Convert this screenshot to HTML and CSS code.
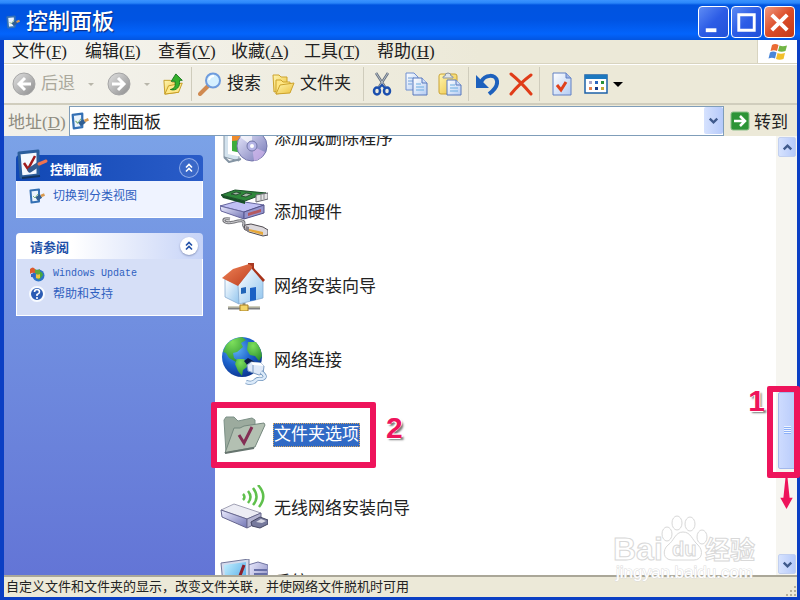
FILE: index.html
```html
<!DOCTYPE html>
<html lang="zh-CN">
<head>
  <meta charset="UTF-8">
  <meta name="viewport" content="width=device-width, initial-scale=1.0">
  <title>控制面板</title>
  <link rel="stylesheet" href="styles.css">
</head>
<body>
  <svg class="defs" width="0" height="0">
    <defs>
      <linearGradient id="gray" x1="0" y1="0" x2="1" y2="1"><stop offset="0" stop-color="#e2e2e2"/><stop offset="1" stop-color="#8c8c8c"/></linearGradient>
      <linearGradient id="lilac" x1="0" y1="0" x2="1" y2="1"><stop offset="0" stop-color="#ececff"/><stop offset="1" stop-color="#7275b4"/></linearGradient>
      <linearGradient id="yellow" x1="0" y1="0" x2="1" y2="1"><stop offset="0" stop-color="#fff6b0"/><stop offset="1" stop-color="#ecc03c"/></linearGradient>
      <linearGradient id="sheet" x1="0" y1="0" x2="1" y2="1"><stop offset="0" stop-color="#ffffff"/><stop offset="1" stop-color="#b4ccf2"/></linearGradient>
      <linearGradient id="wall" x1="0" y1="0" x2="1" y2="1"><stop offset="0" stop-color="#ffffff"/><stop offset="1" stop-color="#8fc4ee"/></linearGradient>
      <radialGradient id="sea" cx=".35" cy=".3" r=".8"><stop offset="0" stop-color="#62b4f4"/><stop offset=".5" stop-color="#1c62cc"/><stop offset="1" stop-color="#0a2c84"/></radialGradient>
      <radialGradient id="land" cx=".4" cy=".2" r=".9"><stop offset="0" stop-color="#7ee05c"/><stop offset="1" stop-color="#238a2c"/></radialGradient>
      <linearGradient id="roof" x1="0" y1="0" x2="1" y2="1"><stop offset="0" stop-color="#f08458"/><stop offset="1" stop-color="#bc3c1c"/></linearGradient>
      <linearGradient id="screen" x1="0" y1="0" x2="1" y2="1"><stop offset="0" stop-color="#c4f0ff"/><stop offset="1" stop-color="#3c9ce0"/></linearGradient>
      <symbol id="panel" viewBox="0 0 32 32">
        <path d="M3 5 22 3v24L5 29z" fill="#f4f9ff" stroke="#2b5e9c" stroke-width="3" stroke-linejoin="round"/>
        <path d="m6 30 18-2" stroke="#12345f" stroke-width="2"/>
        <path d="m8 15 4 6 7-13" fill="none" stroke="#a01c1c" stroke-width="2.500"/>
        <path d="m14 22 9-6" stroke="#345d91" stroke-width="5" stroke-linecap="round"/>
        <path d="m23 16 7-3" stroke="#ef7350" stroke-width="3" stroke-linecap="round"/>
      </symbol>
      <symbol id="panel-small" viewBox="0 0 16 16">
        <path d="M1.500 2.500 10 1.500v12L2.500 14.500z" fill="#eaf3fd" stroke="#3470b4" stroke-width="2" stroke-linejoin="round"/>
        <path d="m4 8 2 2 3-4" fill="none" stroke="#84b67c"/>
        <path d="m7.500 11 4.500-3" stroke="#305e92" stroke-width="4"/>
        <path d="m12 8 3.500-1.500" stroke="#d99a50" stroke-width="2.500"/>
      </symbol>
      <symbol id="chevrons" viewBox="0 0 18 18">
        <path d="m6 8.500 3-3 3 3m-6 4 3-3 3 3" fill="none" stroke="currentColor" stroke-width="1.600"/>
      </symbol>
    </defs>
  </svg>

  <div class="window">
    <header class="titlebar">
      <svg class="title-icon" viewBox="0 0 16 16"><use href="#panel-small"/></svg>
      <h1 class="title">控制面板</h1>
      <button class="caption" aria-label="最小化"><svg viewBox="0 0 30 30"><path d="M7 21h11v4H7z" fill="#fff"/></svg></button>
      <button class="caption" aria-label="最大化"><svg viewBox="0 0 30 30"><path d="M7 7h16v16H7zM6 7h18" fill="none" stroke="#fff" stroke-width="3"/></svg></button>
      <button class="caption caption-close" aria-label="关闭"><svg viewBox="0 0 30 30"><path d="m7 7 16 16M23 7 7 23" stroke="#fff" stroke-width="4"/></svg></button>
    </header>

    <nav class="menubar">
      <button class="menu">文件(<u>F</u>)</button>
      <button class="menu">编辑(<u>E</u>)</button>
      <button class="menu">查看(<u>V</u>)</button>
      <button class="menu">收藏(<u>A</u>)</button>
      <button class="menu">工具(<u>T</u>)</button>
      <button class="menu">帮助(<u>H</u>)</button>
      <div class="flag">
        <svg width="20" height="20" viewBox="0 0 20 20">
          <path d="M4 3q3-2 6.500 0L9 9Q6 7.500 2.500 9z" fill="#ea6b34"/>
          <path d="M11.500 3.500q3 1.500 7.500 0L17.500 9q-4 1.500-7.500 0z" fill="#72b545"/>
          <path d="M2 10.500q3-2 6.500 0L7 16.500Q4 15 .5 16.500z" fill="#4a86d8"/>
          <path d="M9.500 11q3 1.500 7.500 0l-1.500 6q-4 1.500-7.500 0z" fill="#f2bf2c"/>
        </svg>
      </div>
    </nav>

    <div class="toolbar">
      <button class="tool" disabled>
        <svg viewBox="0 0 24 24"><circle cx="12" cy="12" r="11" fill="url(#gray)" stroke="#a5a5a5"/><path d="M19 12H7m6-6-6 6 6 6" fill="none" stroke="#fff" stroke-width="3"/></svg>
        后退
      </button>
      <button class="drop" disabled aria-label="后退列表"></button>
      <button class="tool" disabled aria-label="前进">
        <svg viewBox="0 0 24 24"><circle cx="12" cy="12" r="11" fill="url(#gray)" stroke="#a5a5a5"/><path d="M5 12h12m-6-6 6 6-6 6" fill="none" stroke="#fff" stroke-width="3"/></svg>
      </button>
      <button class="drop" disabled aria-label="前进列表"></button>
      <button class="tool tool-up" aria-label="向上">
        <svg viewBox="0 0 24 24"><path d="M1 8h7l2 2h7v11L2 23z" fill="url(#yellow)" stroke="#c49a20"/><path d="m2 23 4-9 15-3-4 10z" fill="#ffe98a" stroke="#c49a20"/><path d="M8 18c5-1 6-4 5-9H9l5-8 7 7h-3c1 7-3 12-10 10z" fill="#35b02c" stroke="#16751a"/></svg>
      </button>
      <span class="sep"></span>
      <button class="tool">
        <svg viewBox="0 0 24 24"><path d="m2 22 8-8" stroke="#d08a50" stroke-width="4" stroke-linecap="round"/><circle cx="15" cy="8.500" r="7" fill="#d5f0ff" stroke="#6f9cdd" stroke-width="2"/><path d="M11 8q1-4 5-4" fill="none" stroke="#fff" stroke-width="2"/></svg>
        搜索
      </button>
      <button class="tool tool-folders">
        <svg viewBox="0 0 24 24"><path d="M2 3h6l2 2h6v12L3 20z" fill="url(#yellow)" stroke="#cda32c"/><path d="M5 8h5l2 2h7v10L5 22z" fill="#ffe683" stroke="#cda32c"/><path d="m5 22 4-9 14-2-4 10z" fill="url(#yellow)" stroke="#cda32c"/></svg>
        文件夹
      </button>
      <span class="sep"></span>
      <button class="tool tool-icon" aria-label="剪切">
        <svg viewBox="0 0 24 24"><path d="m6 1 9 14M18 1 9 15" stroke="#65707e" stroke-width="2.500"/><path d="m6 1 9 14M18 1 9 15" stroke="#c8d0da" stroke-width=".8"/><ellipse cx="7" cy="19" rx="3" ry="3.500" fill="none" stroke="#1b4fae" stroke-width="2.500"/><ellipse cx="17" cy="19" rx="3" ry="3.500" fill="none" stroke="#1b4fae" stroke-width="2.500"/><path d="m9 16 3-3 3 3" fill="none" stroke="#1b4fae" stroke-width="2"/></svg>
      </button>
      <button class="tool tool-icon" aria-label="复制">
        <svg viewBox="0 0 24 24"><path d="M2 1h8l4 4v13H2z" fill="url(#sheet)" stroke="#6f8fd0"/><path d="M4 6h6m-6 3h7m-7 3h4" stroke="#74a2d8"/><path d="M9 6h9l5 5v12H9z" fill="url(#sheet)" stroke="#5878bc"/><path d="M18 6v5h5" fill="#cfdef8" stroke="#5878bc"/><path d="M12 12h5m-5 3h8m-8 3h8" stroke="#6bade0"/></svg>
      </button>
      <button class="tool tool-icon" aria-label="粘贴">
        <svg viewBox="0 0 24 24"><rect x="1" y="2" width="18" height="20" rx="2" fill="url(#yellow)" stroke="#c9a234"/><path d="M5 5q0-1 2-1 0-3 3-3t3 3q2 0 2 1v1H5z" fill="#dfe5e8" stroke="#8a94a0"/><path d="M9 8h9l5 5v10H9z" fill="url(#sheet)" stroke="#5878bc"/><path d="M18 8v5h5" fill="#cfdef8" stroke="#5878bc"/><path d="M12 13h5m-5 3h8m-8 3h8" stroke="#6bade0"/></svg>
      </button>
      <span class="sep"></span>
      <button class="tool tool-icon" aria-label="撤消">
        <svg viewBox="0 0 24 24"><path d="M6 10c4-8 15-8 16-1 1 6-4 10-8 13" fill="none" stroke="#1d61bd" stroke-width="4"/><path d="M1 3v13h13z" fill="#1d61bd"/></svg>
      </button>
      <button class="tool tool-icon" aria-label="删除">
        <svg viewBox="0 0 24 24"><path d="M2 2q10 8 20 20M22 3Q10 12 2 22" fill="none" stroke="#e03c18" stroke-width="3" stroke-linecap="round"/></svg>
      </button>
      <span class="sep"></span>
      <button class="tool tool-icon tool-props" aria-label="属性">
        <svg viewBox="0 0 24 24"><path d="M3 1h13l5 5v17H3z" fill="url(#sheet)" stroke="#6080c4"/><path d="M16 1v5h5" fill="#9fb5e4" stroke="#6080c4"/><path d="m7 13 4 5 5-8" fill="none" stroke="#e0411c" stroke-width="3"/></svg>
      </button>
      <button class="tool tool-views" aria-label="查看方式">
        <svg viewBox="0 0 24 24"><path d="M1 3h22v18H1z" fill="#fff" stroke="#1d61a8" stroke-width="1.500"/><path d="M1 3h22v4H1z" fill="#1c78bf"/><path d="M5 9h3v3H5z" fill="#aaa6cc"/><path d="M11 9h3v3h-3z" fill="#2b66c0"/><path d="M17 9h3v3h-3z" fill="#279037"/><path d="M5 15h3v3H5z" fill="#e48050"/><path d="M11 15h3v3h-3z" fill="#173b88"/><path d="M17 15h3v3h-3z" fill="#c4aa38"/></svg>
        <span class="triangle"></span>
      </button>
    </div>

    <form class="addressbar">
      <label class="address-label" for="address">地址(<u>D</u>)</label>
      <div class="combo">
        <svg class="combo-icon" viewBox="0 0 16 16"><use href="#panel-small"/></svg>
        <input class="address" id="address" type="text" value="控制面板">
        <button class="combo-button" type="button" aria-label="展开"><svg viewBox="0 0 16 16"><path d="m4 6 4 4 4-4" fill="none" stroke="#3f5a8c" stroke-width="2.500"/></svg></button>
      </div>
      <button class="go" type="button">
        <svg viewBox="0 0 20 20"><rect x="1" y="1" width="18" height="18" rx="2" fill="#2d9437" stroke="#8cbf8a"/><path d="M4 10h11m-5-5 5 5-5 5" fill="none" stroke="#fff" stroke-width="2.500"/></svg>
        转到
      </button>
    </form>

    <main class="content">
      <aside class="sidebar">
        <section class="panel panel-main">
          <div class="panel-head">
            <svg class="panel-icon" viewBox="0 0 32 32"><use href="#panel"/></svg>
            <h2 class="panel-title">控制面板</h2>
            <button class="collapse" aria-label="折叠"><svg viewBox="0 0 18 18"><use href="#chevrons"/></svg></button>
          </div>
          <div class="panel-body">
            <a class="task" href="#"><svg viewBox="0 0 16 16"><use href="#panel-small"/></svg>切换到分类视图</a>
          </div>
        </section>
        <section class="panel">
          <div class="panel-head">
            <h2 class="panel-title">请参阅</h2>
            <button class="collapse" aria-label="折叠"><svg viewBox="0 0 18 18"><use href="#chevrons"/></svg></button>
          </div>
          <div class="panel-body">
            <a class="task latin" href="#"><svg viewBox="0 0 16 16"><circle cx="9.500" cy="9.500" r="6" fill="#2d74c8"/><path d="M8 6q5-2 6 3l-4 5q-3-2-1-4z" fill="#49a83e"/><path d="M1 3q3-3 5 0v4q-3-1-5 1z" fill="#dc5a2c"/><path d="M6 3q3 2 5 0v5q-2 1-5-1z" fill="#62a83a"/><path d="M2 8q2-1 4 0v4q-2-1-4-1z" fill="#3464bc"/><path d="M7 8q2 1 4 0v4q-2 1-4 0z" fill="#efc43a"/></svg>Windows Update</a>
            <a class="task" href="#"><svg viewBox="0 0 16 16"><circle cx="8" cy="8" r="7" fill="#2b5cb4" stroke="#f8fbff" stroke-width="2"/><path d="M5.500 6q0-2.500 2.500-2.500T10.500 6Q10.500 7.500 8 8.500V10m0 1v2" fill="none" stroke="#fff" stroke-width="1.600"/></svg>帮助和支持</a>
          </div>
        </section>
      </aside>

      <ul class="items">
        <li class="item">
          <svg viewBox="0 0 48 48"><path d="M4 10 19 6v40L4 42z" fill="#d3e2ed" stroke="#8494a3"/><path d="m8 12 14-3v33L8 39z" fill="#fff"/><path d="m12 16 10-2v12l-10 1z" fill="#ef8c2c"/><path d="m12 26 10-1v13l-10-2z" fill="#3cad3c"/><path d="m4 42 5 5 12-3" fill="none" stroke="#8494a3" stroke-width="2"/><circle cx="32" cy="31" r="15" fill="url(#lilac)" stroke="#7478ac"/><path d="M32 31 20 22q5-6 12-6z" fill="#fff" opacity=".7"/><path d="m32 31 13 6q-4 8-11 9z" fill="#d4b8ee" opacity=".7"/><circle cx="32" cy="31" r="5" fill="#b4b4e6" stroke="#7276a8"/><circle cx="32" cy="31" r="2" fill="#fff"/></svg>
          <a class="item-name" href="#">添加或删除程序</a>
        </li>
        <li class="item">
          <svg viewBox="0 0 48 48"><path d="M10 30q-7-1-6 2 2 3 10 1 10-3 10 1-2 4 4 5" fill="none" stroke="#77777c" stroke-width="3"/><path d="M10 30q-7-1-6 2 2 3 10 1 10-3 10 1-2 4 4 5" fill="none" stroke="#cfcfd2"/><path d="m25 36 6-1 12 3 5 3v5l-5 1-14-4-5-3z" fill="#dcd8dc" stroke="#4f4b50"/><path d="m29 40 14 3v3l-14-4z" fill="#e6a738"/><path d="m26 37 3 1v5l-4-2z" fill="#8a8488"/><path d="m0 17 18-5 26 4-20 7z" fill="#c0c0f4" stroke="#67679e"/><path d="m0 17 24 6v7L1 22z" fill="url(#lilac)" stroke="#67679e"/><path d="m24 23 20-7v8l-20 6z" fill="#9494cc" stroke="#52528a"/><path d="m28 24 13-4v3l-13 4z" fill="#b45860"/><path d="m1 6 14-5 31 3-21 8z" fill="#2e873b" stroke="#1b4e29"/><path d="m1 6 24 6v3L3 9z" fill="#174f26"/><path d="m11 5 5-2 5 1-5 2zm10 2 5-3 6 1-6 3z" fill="#a4b6a8" stroke="#284f32"/><path d="m36 6 12-2v6l-12 3z" fill="#e4e4e4" stroke="#66666e"/><path d="M41 6v5m3-6v5" stroke="#88888e"/></svg>
          <a class="item-name" href="#">添加硬件</a>
        </li>
        <li class="item">
          <svg viewBox="0 0 48 48"><path d="M28 0h6v9l-6-3z" fill="#a83a24"/><path d="m5 16 14 6v19L5 34z" fill="url(#wall)" stroke="#88acd0" stroke-width=".8"/><path d="M18 22 32 5l11 12v18l-24 6z" fill="url(#wall)" stroke="#88acd0" stroke-width=".8"/><path d="m2 15 11-9L29 1l4 3-15 19z" fill="url(#roof)"/><path d="m32 3 13 14-2 2L32 6z" fill="#a83218"/><path d="m21 25 5-1v6l-5 1z" fill="#2165b8"/><path d="m30 25 6-1v13l-6 1z" fill="#1b61c4"/><path d="M24 40v4" stroke="#8f9690" stroke-width="3"/><path d="M8 45h32" stroke="#7d7f80" stroke-width="3"/><path d="M8 44h32" stroke="#e0dcb8"/><path d="M20 42h8v6h-8z" fill="#f3d568" stroke="#a77f26"/></svg>
          <a class="item-name" href="#">网络安装向导</a>
        </li>
        <li class="item">
          <svg viewBox="0 0 48 48"><circle cx="22" cy="20" r="20" fill="url(#sea)"/><path d="M6 8Q12 1 22 0l4 3-5 3 2 4-6 5-4 1 1 5 4 3-2 1-7-4-3-5-3-1z" fill="url(#land)"/><path d="m17 22 7 0 5 4-2 4-4 3-1 6-4-5-3-7z" fill="url(#land)"/><path d="m28 5 8 0q5 6 6 14l-3 5-4-5-5-1-3-5z" fill="url(#land)"/><path d="m24 24 4-3 7 4-7 4z" fill="#0c1c48"/><path d="m27 28 4-3 10 1 3 3-1 8-4 1-11-4z" fill="#dfe9f8" stroke="#7c9bc2"/><path d="m31 25 10 1 3 3-11-1z" fill="#fff"/><path d="M33 28v8" stroke="#7c9bc2"/><path d="M41 35q7 5 1 7-5-1-7 2-3 3-9 1" fill="none" stroke="#6f94bd" stroke-width="4"/><path d="M41 35q7 5 1 7-5-1-7 2-3 3-9 1" fill="none" stroke="#dcebfa" stroke-width="2.500"/></svg>
          <a class="item-name" href="#">网络连接</a>
        </li>
        <li class="item selected">
          <svg viewBox="0 0 48 48"><path d="m4 9 2-3 8 0 4 4 14-3 3 2v10L6 42z" fill="#9cab9e" stroke="#7d9188"/><path d="M5 42 14 17l6 0 4-2 20-3 1 2-10 22z" fill="#b3c0b2" stroke="#75887e"/><path d="m5 42 29-5" stroke="#66746e" stroke-width="2"/><path d="m19 24 5 8 8-16" fill="none" stroke="#832e54" stroke-width="3"/></svg>
          <a class="item-name" href="#">文件夹选项</a>
        </li>
        <li class="item">
          <svg viewBox="0 0 48 48"><path d="m1 25 13-6 27 9-14 6z" fill="#ececf4" stroke="#a1a1b4" stroke-linejoin="round"/><path d="m1 25 26 9v9L2 32z" fill="url(#lilac)" stroke="#66668e" stroke-linejoin="round"/><path d="m27 34 14-6v8l-14 7z" fill="#b4b4d0" stroke="#68688d"/><path d="m31 37 9-5 8 3v4l-8 4-8-2z" fill="#777a9d" stroke="#454763"/><path d="m36 37 5-3 5 2-4 2z" fill="#d7d7e3"/><path d="M23 9q3 3 0 6m5-9q5 6 0 12m5-15q7 9 0 17m5-20q10 11 1 22" fill="none" stroke="#5fc04c" stroke-width="2.500"/></svg>
          <a class="item-name" href="#">无线网络安装向导</a>
        </li>
        <li class="item">
          <svg viewBox="0 0 48 48"><path d="m28 6 10-3 10 3v34L30 45z" fill="url(#lilac)" stroke="#7074a0"/><path d="M34 11h13m-13 4h13" stroke="#6870a8" stroke-width="2"/><path d="m1 4 28-4v33L4 36z" fill="#d4dbec" stroke="#73789a"/><path d="m4 6 22-3v26L6 32z" fill="url(#screen)"/><path d="m14 18 4 4 6-16" fill="none" stroke="#8b1f2c" stroke-width="3"/></svg>
          <a class="item-name" href="#">系统</a>
        </li>
      </ul>

      <div class="scrollbar">
        <button class="scroll-button" aria-label="向上滚动"><svg viewBox="0 0 16 16"><path d="m4 10 4-4 4 4" fill="none" stroke="#3f5a8c" stroke-width="2.500"/></svg></button>
        <div class="track"><div class="thumb"><span class="grip"></span></div></div>
        <button class="scroll-button" aria-label="向下滚动"><svg viewBox="0 0 16 16"><path d="m4 6 4 4 4-4" fill="none" stroke="#3f5a8c" stroke-width="2.500"/></svg></button>
      </div>
    </main>

    <footer class="statusbar">
      <span>自定义文件和文件夹的显示，改变文件关联，并使网络文件脱机时可用</span>
      <svg class="resize" viewBox="0 0 12 12"><path d="M9 1h2v2H9zM5 5h2v2H5zm4 0h2v2H9zM1 9h2v2H1zm4 0h2v2H5zm4 0h2v2H9z" fill="#b5b09b"/></svg>
    </footer>

    <div class="mark mark-scroll"></div>
    <span class="number number-one">1</span>
    <svg class="arrow" viewBox="0 0 12 30"><path d="M5 0h2l2 19h3L6 30 0 19h3z" fill="#ee145b"/></svg>
    <div class="mark mark-item"></div>
    <span class="number number-two">2</span>

    <svg class="watermark" viewBox="0 0 146 72">
      <g fill="#fff" stroke="#d8d8d8">
        <ellipse cx="55" cy="24" rx="5" ry="7"/>
        <ellipse cx="65" cy="13" rx="5" ry="7"/>
        <ellipse cx="78" cy="14" rx="5" ry="7"/>
        <ellipse cx="90" cy="27" rx="5" ry="7"/>
        <path d="M71 22c8 0 9 8 15 13 6 6 4 15-4 15H60c-9 0-10-10-4-15 6-4 7-13 15-13z"/>
        <text class="wm-bai" x="1" y="50">Bai</text>
        <text class="wm-du" x="60" y="46">du</text>
        <text class="wm-cn" x="93" y="49">经验</text>
      </g>
      <text class="wm-url" x="4" y="68">jingyan.baidu.com</text>
    </svg>
  </div>
</body>
</html>
```
FILE: styles.css
```css
:root {
  --face: #ece9d8;
  --frame: #0b3fc4;
  --link: #2f5fc0;
  --red: #ee145b;
  --lg: 22px;
  --md: 17px;
  --sm: 13px;
  --xs: 12px;
}
* {
  box-sizing: border-box;
}
body {
  margin: 0;
  font-family: "Liberation Serif", "Noto Sans CJK SC", sans-serif;
  font-size: var(--md);
  color: #222;
}
button {
  font: inherit;
  color: inherit;
  border: 0;
  padding: 0;
  background: none;
}
a {
  color: inherit;
  text-decoration: none;
}
svg {
  display: block;
  flex: none;
}
.defs {
  position: absolute;
}
.window {
  position: relative;
  display: flex;
  flex-direction: column;
  height: 100vh;
  padding: 0 3px 3px 4px;
  background: var(--frame);
  overflow: hidden;
}

/* title bar */
.titlebar {
  display: flex;
  align-items: center;
  gap: 2px;
  flex: none;
  height: 40px;
  margin: 0 -3px 0 -4px;
  padding: 4px 5px 0 6px;
  background: linear-gradient(#3a93ff 0, #2a86fa 3px, #0054e0 5px, #0054e3 50%, #0364fc 85%, #0355e0);
}
.title-icon {
  width: 14px;
  height: 16px;
}
.title {
  flex: 1;
  margin: 0 0 0 4px;
  font-size: var(--lg);
  line-height: 32px;
  font-weight: 500;
  color: #fff;
  text-shadow: 1px 1px 1px #0a2a80;
}
.caption {
  width: 31px;
  height: 32px;
  border: 1px solid #fff;
  border-radius: 4px;
  background: linear-gradient(135deg, #5e8cf4, #2c5ce6 50%, #2251d8);
}
.caption-close {
  background: linear-gradient(135deg, #f09a80, #dc4c28 50%, #c23a18);
}

/* menu bar */
.menubar {
  display: flex;
  align-items: stretch;
  flex: none;
  height: 24px;
  padding-left: 8px;
  background: linear-gradient(90deg, #f6f5f1, var(--face) 60%);
  border-bottom: 1px solid #d8d4c0;
}
.menu {
  width: 73px;
  line-height: 23px;
  text-align: left;
  white-space: nowrap;
}
.flag {
  display: grid;
  place-items: center;
  width: 40px;
  margin-left: auto;
  background: #fff;
  border-left: 1px solid #d8d4c0;
}

/* toolbar */
.toolbar {
  display: flex;
  align-items: center;
  gap: 2px;
  flex: none;
  height: 41px;
  padding-left: 4px;
  background: linear-gradient(90deg, #f4f3ee, var(--face) 60%);
  border-top: 1px solid #fff;
  border-bottom: 2px solid #d0cdbd;
}
.tool {
  display: flex;
  align-items: center;
  justify-content: center;
  gap: 5px;
  padding: 0 4px;
  line-height: 24px;
  white-space: nowrap;
}
.tool svg {
  width: 24px;
  height: 24px;
}
.tool:disabled {
  color: #aaa89c;
}
.tool-up svg {
  width: 22px;
}
.tool-folders {
  margin-right: 6px;
}
.tool-icon {
  width: 32px;
}
.tool-props {
  margin-left: 4px;
}
.drop {
  width: 20px;
  height: 24px;
  display: grid;
  place-items: center;
}
.drop::before,
.triangle {
  content: "";
  border: 5px solid transparent;
  border-top-color: #000;
  border-bottom: 0;
}
.drop::before {
  border-width: 3px 3px 0;
  border-top-color: #b8b6aa;
}
.sep {
  width: 1px;
  height: 34px;
  background: #cfccbc;
}

/* address bar */
.addressbar {
  display: flex;
  align-items: center;
  flex: none;
  height: 31px;
  padding-left: 4px;
  background: linear-gradient(90deg, #f2f1ea, var(--face) 60%);
}
.address-label {
  width: 61px;
  color: #8e8c80;
  white-space: nowrap;
}
.combo {
  display: flex;
  align-items: center;
  flex: 1;
  height: 30px;
  background: #fff;
  border: 1px solid #7f9db9;
}
.combo-icon {
  width: 18px;
  height: 18px;
  margin-left: 1px;
}
.address {
  flex: 1;
  min-width: 0;
  height: 26px;
  padding: 0 0 0 4px;
  border: 0;
  outline: 0;
  background: none;
  font: inherit;
  color: inherit;
}
.combo-button,
.scroll-button {
  display: grid;
  place-items: center;
  background: linear-gradient(90deg, #d6e2fe, #b6cafa);
  border-radius: 2px;
}
.combo-button {
  width: 19px;
  height: 27px;
}
.combo-button svg,
.scroll-button svg {
  width: 15px;
  height: 15px;
}
.go {
  display: flex;
  align-items: center;
  gap: 4px;
  padding: 0 9px 0 6px;
}
.go svg {
  width: 20px;
  height: 20px;
}

/* content */
.content {
  display: flex;
  flex: 1;
  min-height: 0;
  background: #fff;
}
.sidebar {
  flex: none;
  width: 211px;
  padding: 19px 12px;
  background: linear-gradient(#7ba2e7, #6375d6);
}
.panel {
  margin-bottom: 15px;
}
.panel-head {
  display: flex;
  align-items: center;
  height: 26px;
  padding: 0 5px 0 14px;
  border-radius: 4px 4px 0 0;
  background: linear-gradient(90deg, #fff 30%, #c6d3f7);
  color: #2150a8;
}
.panel-title {
  flex: 1;
  margin: 0;
  font-size: var(--sm);
  font-weight: 700;
}
.panel-icon {
  width: 32px;
  height: 32px;
  margin: -8px 2px 0 0;
}
.collapse {
  width: 18px;
  height: 18px;
  border-radius: 50%;
  background: #fff;
  box-shadow: 0 1px 2px #8a97bd;
}
.panel-body {
  display: flex;
  flex-direction: column;
  padding: 5px 12px 11px;
  background: #d6dff7;
  border: 1px solid #fff;
  border-top: 0;
}
.task {
  display: flex;
  align-items: center;
  gap: 8px;
  font-size: var(--xs);
  line-height: 20px;
  color: var(--link);
}
.task svg {
  width: 16px;
  height: 16px;
}
.latin {
  font-family: "Liberation Mono", monospace;
  font-size: 10px;
}
.panel-main .panel-head {
  padding-left: 0;
  background: linear-gradient(90deg, #1148b4, #2a5cc8);
  color: #fff;
}
.panel-main .collapse {
  background: #3a68c8;
  box-shadow: 0 0 0 1px #8fabe8;
}
.panel-main .panel-body {
  background: #eff3ff;
}

/* icon list */
.items {
  flex: 1;
  min-width: 0;
  margin: 0;
  padding: 0;
  list-style: none;
  overflow: hidden;
}
.item {
  display: flex;
  align-items: center;
  gap: 5px;
  height: 74px;
  padding-left: 5px;
}
.item:first-child {
  margin-top: -34px;
}
.item svg {
  width: 48px;
  height: 48px;
}
.item-name {
  padding: 0 1px;
  line-height: 24px;
}
.selected .item-name {
  background: #316ac5;
  color: #fff;
  outline: 1px dotted #d8a860;
  outline-offset: -1px;
}

/* scroll bar */
.scrollbar {
  display: flex;
  flex-direction: column;
  flex: none;
  width: 21px;
  padding: 1px 2px;
  background: #f6f5f0;
}
.scroll-button {
  width: 18px;
  height: 20px;
  border: 1px solid #c2d0f0;
}
.track {
  display: flex;
  flex-direction: column;
  flex: 1;
}
/* list is scrolled most of the way down */
.track::before {
  content: "";
  flex: 237;
}
.track::after {
  content: "";
  flex: 86;
}
.thumb {
  display: grid;
  place-items: center;
  flex: 76;
  width: 18px;
  border: 1px solid #a3b8ec;
  border-radius: 2px;
  background: linear-gradient(90deg, #cddbfe, #b9ccfb);
}
.grip {
  width: 7px;
  height: 8px;
  background: repeating-linear-gradient(#eef4fe 0 1px, #8cb0f8 1px 2px);
}

.statusbar {
  display: flex;
  align-items: center;
  justify-content: space-between;
  flex: none;
  height: 22px;
  padding-left: 2px;
  font-size: var(--sm);
  line-height: 18px;
  background: var(--face);
  border-top: 2px solid #aaa798;
}
.resize {
  width: 12px;
  height: 12px;
  align-self: flex-end;
}

/* callouts over the window */
.mark {
  position: absolute;
  border: 6px solid var(--red);
  border-radius: 2px;
}
.mark-scroll {
  right: 0;
  top: 386px;
  width: 33px;
  height: 92px;
}
.mark-item {
  left: 211px;
  top: 402px;
  width: 165px;
  height: 66px;
}
.number {
  position: absolute;
  font: bold 30px/30px "Liberation Sans", sans-serif;
  color: var(--red);
  text-shadow: -1px -1px #fff, 1px -1px #fff, -1px 1px #fff, 2px 2px 2px #777;
}
.number-one {
  right: 35px;
  top: 386px;
}
.number-two {
  left: 386px;
  top: 413px;
}
.arrow {
  position: absolute;
  right: 7px;
  top: 478px;
  width: 13px;
  height: 31px;
}
.watermark {
  position: absolute;
  right: 42px;
  bottom: 18px;
  width: 146px;
  height: 72px;
}
.wm-bai {
  font: bold 32px "Liberation Sans", sans-serif;
}
.wm-du {
  font: bold 20px "Liberation Sans", sans-serif;
}
.wm-cn {
  font: bold 25px "Noto Sans CJK SC", sans-serif;
}
.wm-url {
  font: 17px "Liberation Sans", sans-serif;
  fill: #fff;
  stroke: #dcdcdc;
  stroke-width: 1px;
  paint-order: stroke;
}
```
